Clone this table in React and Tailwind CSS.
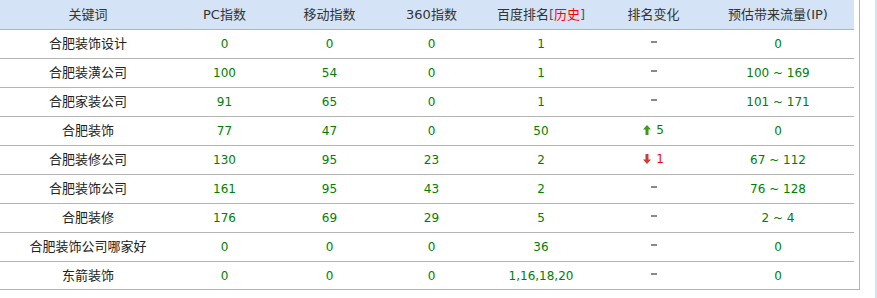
import React from 'react';

const rows = [
  { kw: '合肥装饰设计', pc: '0', mobile: '0', s360: '0', rank: '1', change: null, ip: '0' },
  { kw: '合肥装潢公司', pc: '100', mobile: '54', s360: '0', rank: '1', change: null, ip: '100 ~ 169' },
  { kw: '合肥家装公司', pc: '91', mobile: '65', s360: '0', rank: '1', change: null, ip: '101 ~ 171' },
  { kw: '合肥装饰', pc: '77', mobile: '47', s360: '0', rank: '50', change: { dir: 'up', n: 5 }, ip: '0' },
  { kw: '合肥装修公司', pc: '130', mobile: '95', s360: '23', rank: '2', change: { dir: 'down', n: 1 }, ip: '67 ~ 112' },
  { kw: '合肥装饰公司', pc: '161', mobile: '95', s360: '43', rank: '2', change: null, ip: '76 ~ 128' },
  { kw: '合肥装修', pc: '176', mobile: '69', s360: '29', rank: '5', change: null, ip: '2 ~ 4' },
  { kw: '合肥装饰公司哪家好', pc: '0', mobile: '0', s360: '0', rank: '36', change: null, ip: '0' },
  { kw: '东箭装饰', pc: '0', mobile: '0', s360: '0', rank: '1,16,18,20', change: null, ip: '0' },
];

function UpArrow() {
  return (
    <svg width="8" height="10" viewBox="0 0 8 10" className="inline-block">
      <path d="M4 0 L8 4.5 L5.5 4.5 L5.5 10 L2.5 10 L2.5 4.5 L0 4.5 Z" fill="#3c9a1c" />
    </svg>
  );
}

function DownArrow() {
  return (
    <svg width="8" height="10" viewBox="0 0 8 10" className="inline-block">
      <path d="M2.5 0 L5.5 0 L5.5 5.5 L8 5.5 L4 10 L0 5.5 L2.5 5.5 Z" fill="#d23a3a" />
    </svg>
  );
}

function Change({ change }) {
  if (!change) {
    return <span className="inline-block w-[6px] h-[2px] bg-[#8a8a8a] align-middle mb-[5px]" />;
  }
  if (change.dir === 'up') {
    return (
      <span className="inline-flex items-center gap-[5px]">
        <UpArrow />
        <span className="text-[#008000]">{change.n}</span>
      </span>
    );
  }
  return (
    <span className="inline-flex items-center gap-[5px]">
      <DownArrow />
      <span className="text-[#ff0000]">{change.n}</span>
    </span>
  );
}

export default function App() {
  const cell = 'h-[29px] border-b border-[#b4b4b4] text-center p-0';
  const num = `${cell} text-[12px] text-[#008000]`;

  return (
    <div
      className="flex w-[877px] h-[298px] bg-white"
      style={{ fontFamily: '"DejaVu Sans", "Noto Sans CJK SC", sans-serif' }}
    >
      <div className="w-[860px] h-[290px] border-r border-b border-[#b4b4b4] shrink-0">
        <table className="w-[854px] table-fixed border-collapse">
          <colgroup>
            <col className="w-[176px]" />
            <col className="w-[97px]" />
            <col className="w-[113px]" />
            <col className="w-[91px]" />
            <col className="w-[128px]" />
            <col className="w-[97px]" />
            <col className="w-[152px]" />
          </colgroup>
          <thead>
            <tr className="bg-[#d4e4f6] text-[13px] text-[#333333]">
              <th className={`${cell} font-normal`}>关键词</th>
              <th className={`${cell} font-normal`}>PC指数</th>
              <th className={`${cell} font-normal`}>移动指数</th>
              <th className={`${cell} font-normal`}>360指数</th>
              <th className={`${cell} font-normal`}>
                百度排名<span className="text-[#555]">[</span>
                <span className="text-[#ff0000]">历史</span>
                <span className="text-[#555]">]</span>
              </th>
              <th className={`${cell} font-normal`}>排名变化</th>
              <th className={`${cell} font-normal`}>预估带来流量(IP)</th>
            </tr>
          </thead>
          <tbody>
            {rows.map((r, i) => {
              const last = i === rows.length - 1 ? ' border-b-0' : '';
              return (
                <tr key={r.kw}>
                  <td className={`${cell}${last} text-[13px] text-[#222]`}>{r.kw}</td>
                  <td className={`${num}${last}`}>{r.pc}</td>
                  <td className={`${num}${last}`}>{r.mobile}</td>
                  <td className={`${num}${last}`}>{r.s360}</td>
                  <td className={`${num}${last}`}>{r.rank}</td>
                  <td className={`${cell}${last} text-[12px]`}>
                    <Change change={r.change} />
                  </td>
                  <td className={`${num}${last}`}>{r.ip}</td>
                </tr>
              );
            })}
          </tbody>
        </table>
      </div>
      <div className="w-[15px] shrink-0" />
      <div className="w-[2px] h-full bg-[#d3e5f1] shrink-0" />
    </div>
  );
}
